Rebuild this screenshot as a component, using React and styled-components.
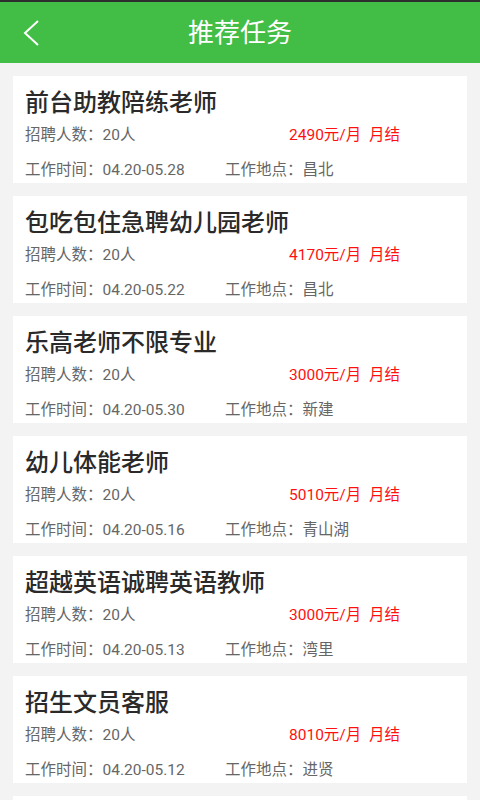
import React from 'react';
import styled, { createGlobalStyle } from 'styled-components';

const GlobalStyle = createGlobalStyle`
  html, body {
    margin: 0;
    padding: 0;
    background: #f3f3f3;
    font-family: Roboto, "Noto Sans CJK SC", sans-serif;
  }
`;

const Page = styled.div`
  width: 480px;
  height: 800px;
  overflow: hidden;
  background: #f3f3f3;
`;

const StatusEdge = styled.div`
  height: 2px;
  background: #2e2e2e;
`;

const Header = styled.div`
  height: 61px;
  background: #42bd45;
  display: flex;
  align-items: center;
  justify-content: center;
  position: relative;
`;

const BackButton = styled.div`
  position: absolute;
  left: 22px;
  top: 16px;
  width: 20px;
  height: 30px;
  display: flex;
  align-items: center;
`;

const HeaderTitle = styled.div`
  color: #ffffff;
  font-size: 26px;
  line-height: 30px;
`;

const List = styled.div`
  display: flex;
  flex-direction: column;
  gap: 13px;
  padding: 13px 13px 0;
`;

const Card = styled.div`
  background: #ffffff;
  height: 107px;
  box-sizing: border-box;
  padding: 12px 12px 0;
`;

const Title = styled.div`
  font-size: 24px;
  line-height: 30px;
  font-weight: 500;
  color: #2a2a2a;
`;

const Row = styled.div`
  display: flex;
  align-items: center;
  height: 20px;
  margin-top: ${p => p.$gap}px;
  font-size: 15.5px;
  color: #666666;
`;

const Cell = styled.div`
  width: ${p => p.$width}px;
  flex-shrink: 0;
  white-space: nowrap;
`;

const Pay = styled.div`
  color: #ff1010;
  white-space: nowrap;
`;

const Chevron = () => (
  <svg width="18" height="28" viewBox="0 0 18 28">
    <path d="M16 2 L3 14 L16 26" fill="none" stroke="#fff" strokeWidth="2" />
  </svg>
);

const jobs = [
  { title: '前台助教陪练老师', pay: '2490', time: '04.20-05.28', place: '昌北' },
  { title: '包吃包住急聘幼儿园老师', pay: '4170', time: '04.20-05.22', place: '昌北' },
  { title: '乐高老师不限专业', pay: '3000', time: '04.20-05.30', place: '新建' },
  { title: '幼儿体能老师', pay: '5010', time: '04.20-05.16', place: '青山湖' },
  { title: '超越英语诚聘英语教师', pay: '3000', time: '04.20-05.13', place: '湾里' },
  { title: '招生文员客服', pay: '8010', time: '04.20-05.12', place: '进贤' },
  { title: '', pay: '', time: '', place: '' },
];

const App = () => {
  return (
    <Page>
      <GlobalStyle />
      <StatusEdge />
      <Header>
        <BackButton>
          <Chevron />
        </BackButton>
        <HeaderTitle>推荐任务</HeaderTitle>
      </Header>
      <List>
        {jobs.map((job, i) => (
          <Card key={i}>
            {job.title && (
              <>
                <Title>{job.title}</Title>
                <Row $gap={5}>
                  <Cell $width={264}>招聘人数：20人</Cell>
                  <Pay>{job.pay}元/月&nbsp;&nbsp;月结</Pay>
                </Row>
                <Row $gap={15}>
                  <Cell $width={200}>工作时间：{job.time}</Cell>
                  <Cell>工作地点：{job.place}</Cell>
                </Row>
              </>
            )}
          </Card>
        ))}
      </List>
    </Page>
  );
};

export default App;
